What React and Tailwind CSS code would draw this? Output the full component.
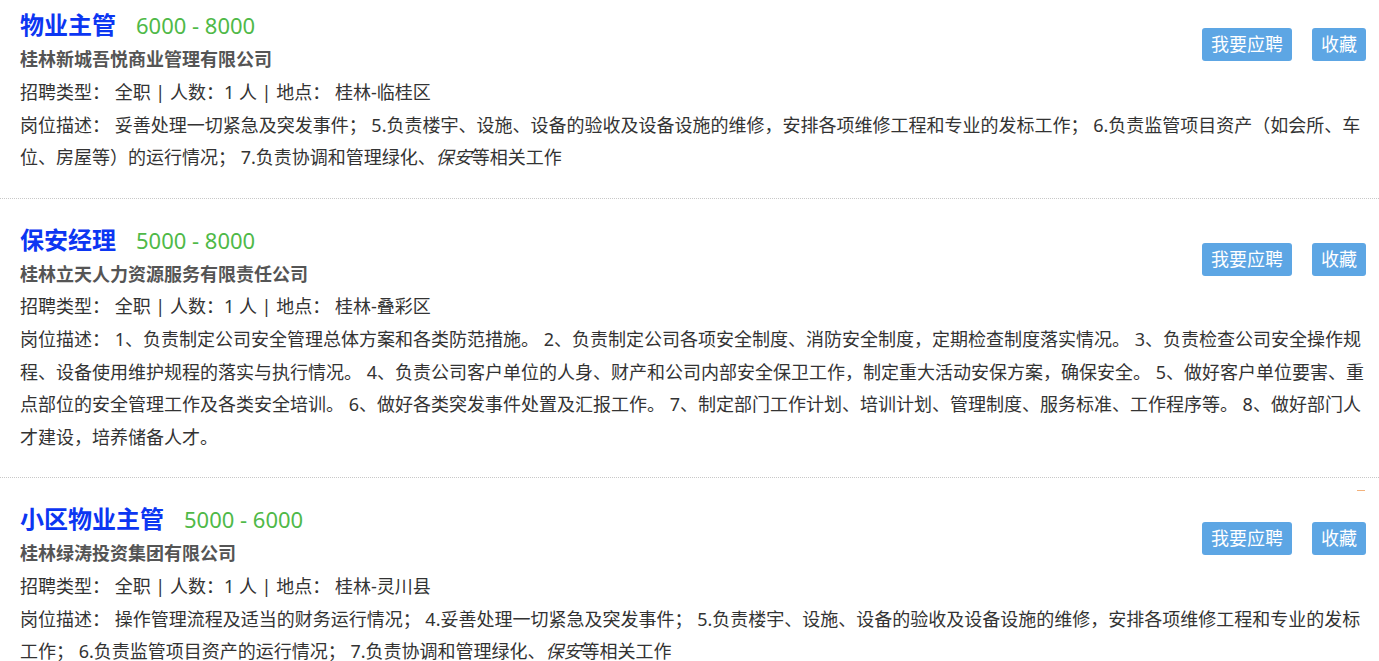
const jobs = [
  {
    title: '物业主管',
    salary: '6000 - 8000',
    company: '桂林新城吾悦商业管理有限公司',
    place: '桂林-临桂区',
    desc: [
      '妥善处理一切紧急及突发事件； 5.负责楼宇、设施、设备的验收及设备设施的维修，安排各项维修工程和专业的发标工作； 6.负责监管项目资产（如会所、车位、房屋等）的运行情况； 7.负责协调和管理绿化、',
      '保安',
      '等相关工作',
    ],
  },
  {
    title: '保安经理',
    salary: '5000 - 8000',
    company: '桂林立天人力资源服务有限责任公司',
    place: '桂林-叠彩区',
    desc: [
      '1、负责制定公司安全管理总体方案和各类防范措施。 2、负责制定公司各项安全制度、消防安全制度，定期检查制度落实情况。 3、负责检查公司安全操作规程、设备使用维护规程的落实与执行情况。 4、负责公司客户单位的人身、财产和公司内部安全保卫工作，制定重大活动安保方案，确保安全。 5、做好客户单位要害、重点部位的安全管理工作及各类安全培训。 6、做好各类突发事件处置及汇报工作。 7、制定部门工作计划、培训计划、管理制度、服务标准、工作程序等。 8、做好部门人才建设，培养储备人才。',
    ],
  },
  {
    title: '小区物业主管',
    salary: '5000 - 6000',
    company: '桂林绿涛投资集团有限公司',
    place: '桂林-灵川县',
    mark: true,
    desc: [
      '操作管理流程及适当的财务运行情况； 4.妥善处理一切紧急及突发事件； 5.负责楼宇、设施、设备的验收及设备设施的维修，安排各项维修工程和专业的发标工作； 6.负责监管项目资产的运行情况； 7.负责协调和管理绿化、',
      '保安',
      '等相关工作',
    ],
  },
];

function JobItem({ job }) {
  return (
    <div className="relative pt-6 pb-6 pl-5 pr-[13px] border-b border-dotted border-[#c8c8c8] first:pt-2">
      {job.mark && <span className="absolute right-[14px] top-[12px] w-2 h-px bg-[#f3b27c]" />}
      <div className="flex justify-between items-start">
        <div>
          <div className="flex items-baseline leading-[34px]">
            <span className="text-[24px] font-bold text-[#0c36f2]">{job.title}</span>
            <span className="ml-5 text-[22px] text-[#4fb948] font-['Noto_Sans',sans-serif]">{job.salary}</span>
          </div>
          <div className="mt-px text-[18px] leading-[32.5px] font-bold text-[#555]">{job.company}</div>
        </div>
        <div className="flex gap-5 mt-5">
          <button className="h-[33px] px-[9px] rounded-[3px] bg-[#5da6e4] text-white text-[18px] leading-[33px]">我要应聘</button>
          <button className="h-[33px] px-[9px] rounded-[3px] bg-[#5da6e4] text-white text-[18px] leading-[33px]">收藏</button>
        </div>
      </div>
      <div className="text-[18px] leading-[33px] text-[#333]">
        招聘类型： 全职 | 人数：1 人 | 地点： {job.place}
      </div>
      <p className="text-[18px] leading-[32.5px] text-[#333]">
        岗位描述： {job.desc[0]}
        {job.desc[1] && <em className="italic">{job.desc[1]}</em>}
        {job.desc[2]}
      </p>
    </div>
  );
}

export default function App() {
  return (
    <div className="w-[1379px] h-[661px] overflow-hidden bg-white font-['Noto_Sans','Noto_Sans_CJK_SC',sans-serif]">
      {jobs.map((job) => (
        <JobItem key={job.title} job={job} />
      ))}
    </div>
  );
}
